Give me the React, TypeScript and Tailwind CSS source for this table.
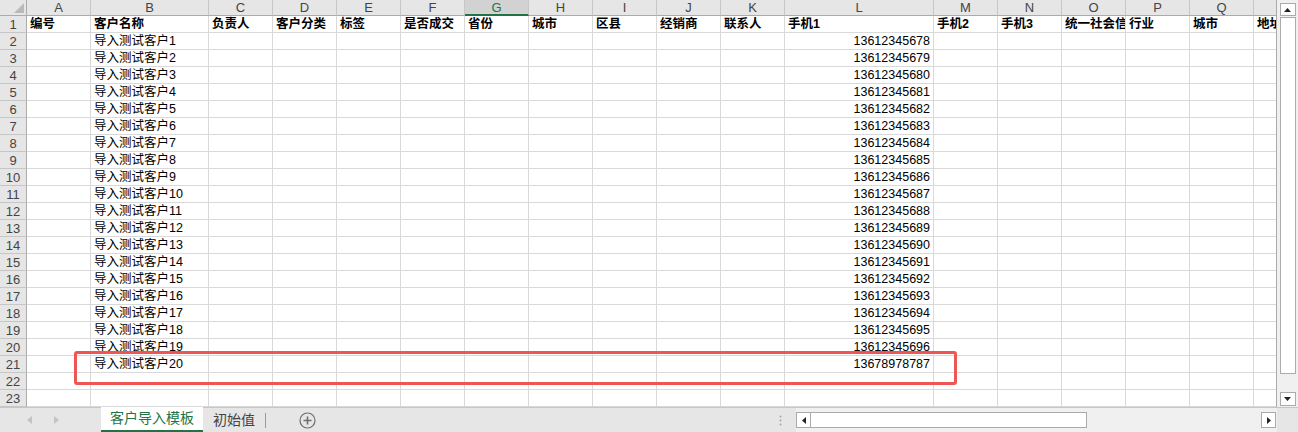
import React from "react";

const COLS = ["A", "B", "C", "D", "E", "F", "G", "H", "I", "J", "K", "L", "M", "N", "O", "P", "Q", "R"];

const HEADERS = [
  "编号",
  "客户名称",
  "负责人",
  "客户分类",
  "标签",
  "是否成交",
  "省份",
  "城市",
  "区县",
  "经销商",
  "联系人",
  "手机1",
  "手机2",
  "手机3",
  "统一社会信用代码",
  "行业",
  "城市",
  "地址",
];

const FONT = { fontFamily: '"Liberation Sans", "Noto Sans CJK SC", sans-serif' };

function buildRows(): string[][] {
  const rows: string[][] = [HEADERS];
  for (let i = 1; i <= 20; i++) {
    const r = Array(18).fill("");
    r[1] = `导入测试客户${i}`;
    r[11] = i === 20 ? "13678978787" : String(13612345678 + i - 1);
    rows.push(r);
  }
  rows.push(Array(18).fill(""));
  rows.push(Array(18).fill(""));
  return rows;
}

function Corner() {
  return (
    <div className="relative h-4 border-r border-b border-[#ababab] bg-[#e6e6e6]">
      <svg className="absolute right-[2px] bottom-[2px]" width="10" height="10" viewBox="0 0 10 10">
        <polygon points="10,0 10,10 0,10" fill="#b9b9b9" />
      </svg>
    </div>
  );
}

function ColHeader({ label }: { label: string }) {
  const selected = label === "G";
  return (
    <div
      className={`h-4 flex items-center justify-center text-[13px] leading-none border-r border-[#c6c6c6] ${
        selected
          ? "bg-[#d2d2d2] text-[#217346] border-b-2 border-b-[#217346]"
          : "bg-[#e6e6e6] text-[#444444] border-b border-b-[#ababab]"
      }`}
    >
      {label}
    </div>
  );
}

function RowHeader({ n }: { n: number }) {
  return (
    <div className="h-[17px] flex items-center justify-center text-[13px] leading-none text-[#444444] bg-[#e6e6e6] border-r border-[#ababab] border-b border-b-[#c6c6c6]">
      {n}
    </div>
  );
}

function Cell({ value, col, bold }: { value: string; col: number; bold: boolean }) {
  const numeric = /^\d+$/.test(value) && col === 11;
  return (
    <div
      className={`h-[17px] flex items-end pb-[1px] px-[3px] overflow-hidden whitespace-nowrap text-[12.5px] leading-[14px] text-black bg-white border-r border-b border-[#d9d9d9] ${
        numeric ? "justify-end" : "justify-start"
      } ${bold ? "font-bold" : ""}`}
    >
      {value}
    </div>
  );
}

function SheetGrid() {
  const rows = buildRows();
  return (
    <div className="relative w-[1277px] h-[407px] overflow-hidden border-r border-[#ababab]">
      <div className="grid grid-cols-[27px_64px_118px_64px_64px_64px_64px_64px_64px_64px_64px_64px_149px_64px_64px_64px_64px_64px_64px] w-max">
        <Corner />
        {COLS.map((c) => (
          <ColHeader key={c} label={c} />
        ))}
        {rows.map((r, ri) => (
          <React.Fragment key={ri}>
            <RowHeader n={ri + 1} />
            {r.map((v, ci) => (
              <Cell key={ci} value={v} col={ci} bold={ri === 0} />
            ))}
          </React.Fragment>
        ))}
      </div>
      <div className="absolute left-[74px] top-[351px] w-[883px] h-[34px] border-[3px] border-[#ef5555] rounded-[3px]" />
    </div>
  );
}

function VScroll() {
  return (
    <div className="w-[21px] h-[407px] bg-[#f0f0f0] flex flex-col items-center pt-[3px]">
      <div className="w-[16px] h-[13px] bg-white border border-[#ababab] flex items-center justify-center">
        <svg width="7" height="4" viewBox="0 0 7 4">
          <polygon points="3.5,0 7,4 0,4" fill="#222" />
        </svg>
      </div>
      <div className="w-[16px] h-[357px] mt-[1px] bg-white border border-[#ababab]" />
      <div className="flex-1" />
      <div className="w-[16px] h-[14px] mb-[1px] bg-white border border-[#ababab] flex items-center justify-center">
        <svg width="7" height="4" viewBox="0 0 7 4">
          <polygon points="0,0 7,0 3.5,4" fill="#222" />
        </svg>
      </div>
    </div>
  );
}

function TabBar() {
  return (
    <div className="h-[25px] flex bg-[#e6e6e6] border-t border-[#c6c6c6]">
      <div className="w-[101px] flex items-center gap-[22px] pl-[27px]">
        <svg width="5" height="8" viewBox="0 0 5 8">
          <polygon points="5,0 5,8 0,4" fill="#c3c3c3" />
        </svg>
        <svg width="5" height="8" viewBox="0 0 5 8">
          <polygon points="0,0 0,8 5,4" fill="#c3c3c3" />
        </svg>
      </div>
      <div className="w-[102px] -mt-px bg-white border-b-2 border-[#217346] flex items-center justify-center text-[14px] text-[#217346]">
        客户导入模板
      </div>
      <div className="w-[62px] flex items-center justify-center text-[14px] text-[#444444]">初始值</div>
      <div className="w-px h-[15px] self-center bg-[#9a9a9a]" />
      <div className="w-[82px] flex items-center justify-center">
        <svg width="17" height="17" viewBox="0 0 17 17">
          <circle cx="8.5" cy="8.5" r="7.5" fill="none" stroke="#6e6e6e" strokeWidth="1.2" />
          <path d="M8.5 4.5v8M4.5 8.5h8" stroke="#6e6e6e" strokeWidth="1.6" />
        </svg>
      </div>
      <div className="flex-1 flex items-center justify-end pr-[14px]">
        <svg width="3" height="11" viewBox="0 0 3 11">
          <circle cx="1.5" cy="1.5" r="1" fill="#a8a8a8" />
          <circle cx="1.5" cy="5.5" r="1" fill="#a8a8a8" />
          <circle cx="1.5" cy="9.5" r="1" fill="#a8a8a8" />
        </svg>
      </div>
      <div className="w-[481px] flex items-center bg-[#f0f0f0]">
        <div className="w-[15px] h-[16px] bg-white border border-[#ababab] flex items-center justify-center">
          <svg width="4" height="7" viewBox="0 0 4 7">
            <polygon points="4,0 4,7 0,3.5" fill="#222" />
          </svg>
        </div>
        <div className="w-[276px] h-[16px] bg-white border border-[#ababab] border-l-0" />
        <div className="flex-1" />
        <div className="w-[15px] h-[16px] mr-[1px] bg-white border border-[#ababab] flex items-center justify-center">
          <svg width="4" height="7" viewBox="0 0 4 7">
            <polygon points="0,0 0,7 4,3.5" fill="#222" />
          </svg>
        </div>
      </div>
      <div className="w-[21px] bg-[#e6e6e6]" />
    </div>
  );
}

export default function App() {
  return (
    <div className="w-[1298px] h-[432px] overflow-hidden bg-white flex flex-col" style={FONT}>
      <div className="flex">
        <SheetGrid />
        <VScroll />
      </div>
      <TabBar />
    </div>
  );
}
